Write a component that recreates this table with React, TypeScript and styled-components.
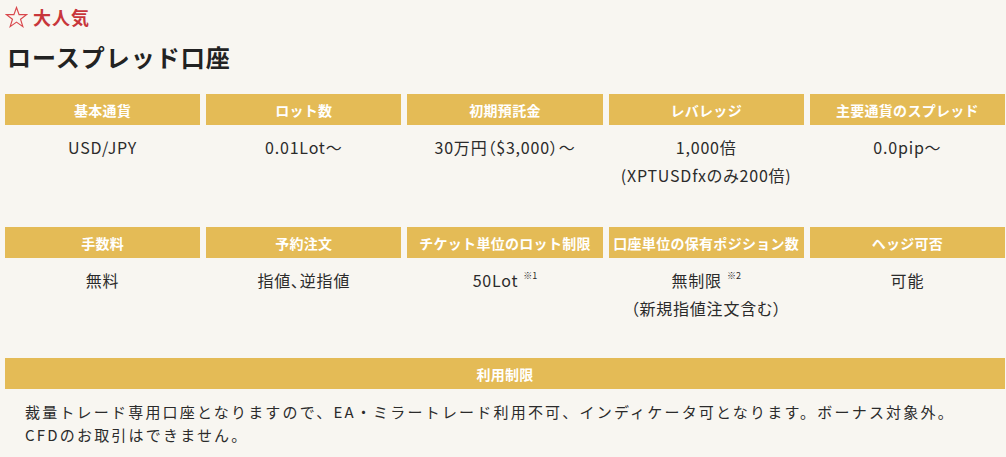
import React from "react";
import styled, { createGlobalStyle } from "styled-components";

const GlobalStyle = createGlobalStyle`
  html, body {
    margin: 0;
    padding: 0;
    background: #f8f6f1;
  }
  body {
    font-family: "Noto Sans CJK JP", "Noto Sans", sans-serif;
    color: #333;
  }
`;

const Page = styled.div`
  width: 1000px;
  padding: 4px 1px 0 5px;
`;

const Badge = styled.div`
  display: flex;
  align-items: center;
  gap: 5px;
  height: 26px;
  color: #c8363b;
  font-weight: 700;
  font-size: 18px;
  letter-spacing: 1px;
`;

const Title = styled.h2`
  margin: 0;
  padding: 9px 0 0 2px;
  font-size: 24px;
  line-height: 36px;
  font-weight: 700;
  color: #222;
  letter-spacing: 1px;
`;

const Grid = styled.div<{ $top: number }>`
  display: grid;
  grid-template-columns: repeat(5, 1fr);
  column-gap: 6px;
  margin-top: ${(p) => p.$top}px;
`;

const Cell = styled.div`
  display: flex;
  flex-direction: column;
`;

const Head = styled.div`
  height: 31px;
  background: #e4bb56;
  color: #fff;
  font-weight: 700;
  font-size: 14px;
  display: flex;
  align-items: center;
  justify-content: center;
  white-space: nowrap;
  letter-spacing: 0.3px;
`;

const Value = styled.div`
  padding: 8px 0 0;
  font-size: 16px;
  line-height: 28px;
  text-align: center;
  color: #2b2b2b;
  letter-spacing: 0.8px;
  font-feature-settings: "palt";
`;

const Note = styled.sup`
  font-size: 9px;
  vertical-align: top;
  position: relative;
  top: -4px;
  margin-left: 5px;
  letter-spacing: 0;
`;

const Wide = styled.div`
  margin-top: 36px;
`;

const WideHead = styled(Head)`
  width: 100%;
`;

const Body = styled.p`
  margin: 0;
  padding: 11px 0 0 20px;
  font-size: 15px;
  line-height: 23px;
  letter-spacing: 2.2px;
  color: #2b2b2b;
`;

const Star = () => (
  <svg width="23" height="23" viewBox="0 0 24 24" fill="none" stroke="#d9474c" strokeWidth="1.2" strokeLinejoin="miter">
    <polygon points="12,1.5 14.7,9 22.5,9 16.2,13.8 18.6,21.5 12,16.8 5.4,21.5 7.8,13.8 1.5,9 9.3,9" />
  </svg>
);

type Item = { head: string; lines: React.ReactNode[] };

const row1: Item[] = [
  { head: "基本通貨", lines: ["USD/JPY"] },
  { head: "ロット数", lines: ["0.01Lot〜"] },
  { head: "初期預託金", lines: ["30万円（$3,000）〜"] },
  { head: "レバレッジ", lines: ["1,000倍", "(XPTUSDfxのみ200倍)"] },
  { head: "主要通貨のスプレッド", lines: ["0.0pip〜"] },
];

const row2: Item[] = [
  { head: "手数料", lines: ["無料"] },
  { head: "予約注文", lines: ["指値、逆指値"] },
  {
    head: "チケット単位のロット制限",
    lines: [
      <>
        50Lot<Note>※1</Note>
      </>,
    ],
  },
  {
    head: "口座単位の保有ポジション数",
    lines: [
      <>
        無制限<Note>※2</Note>
      </>,
      "（新規指値注文含む）",
    ],
  },
  { head: "ヘッジ可否", lines: ["可能"] },
];

const Row = ({ items, top }: { items: Item[]; top: number }) => (
  <Grid $top={top}>
    {items.map((it) => (
      <Cell key={it.head}>
        <Head>{it.head}</Head>
        <Value>
          {it.lines.map((l, i) => (
            <div key={i}>{l}</div>
          ))}
        </Value>
      </Cell>
    ))}
  </Grid>
);

export default function App() {
  return (
    <>
      <GlobalStyle />
      <Page>
        <Badge>
          <Star />
          大人気
        </Badge>
        <Title>ロースプレッド口座</Title>
        <Row items={row1} top={19} />
        <Row items={row2} top={38} />
        <Wide>
          <WideHead>利用制限</WideHead>
          <Body>
            裁量トレード専用口座となりますので、EA・ミラートレード利用不可、インディケータ可となります。ボーナス対象外。
            <br />
            CFDのお取引はできません。
          </Body>
        </Wide>
      </Page>
    </>
  );
}
